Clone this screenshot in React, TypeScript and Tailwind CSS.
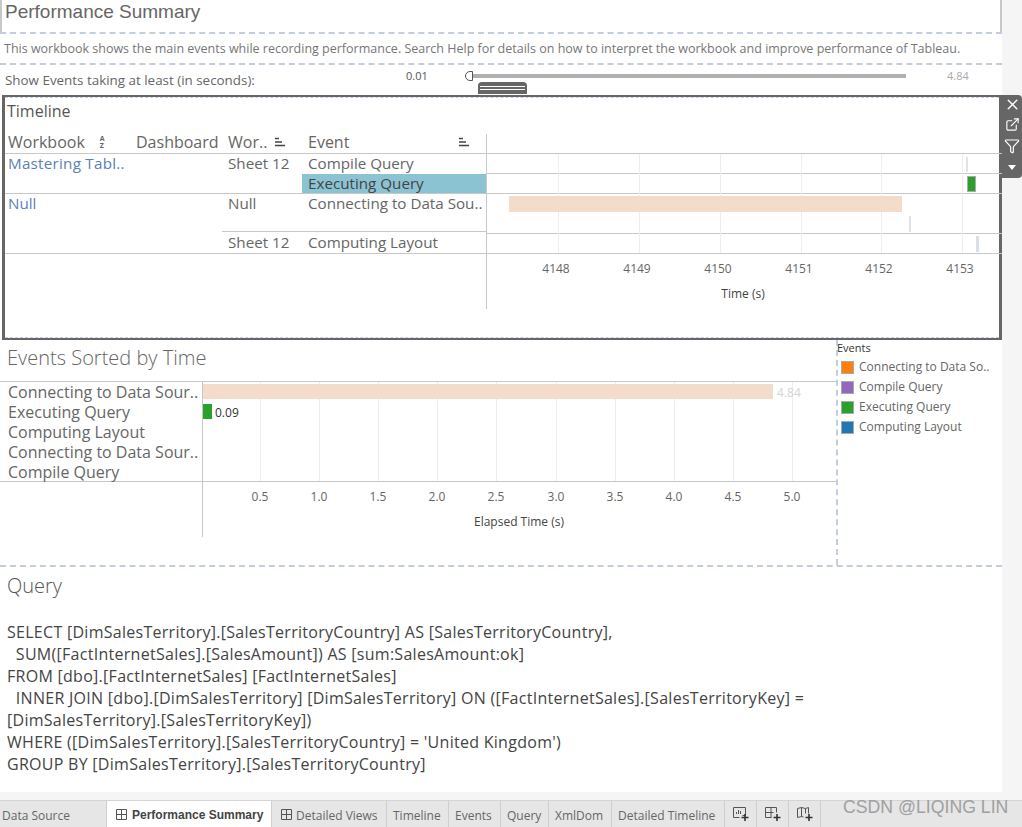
import { X, ExternalLink, Filter } from "lucide-react";

const font = "font-['Open_Sans',sans-serif]";

const timelineTicks = [
  { label: "4148", x: 71 },
  { label: "4149", x: 152 },
  { label: "4150", x: 233 },
  { label: "4151", x: 314 },
  { label: "4152", x: 394 },
  { label: "4153", x: 475 },
];

const elapsedTicks = [
  { label: "0.5", x: 57 },
  { label: "1.0", x: 116 },
  { label: "1.5", x: 175 },
  { label: "2.0", x: 234 },
  { label: "2.5", x: 293 },
  { label: "3.0", x: 353 },
  { label: "3.5", x: 412 },
  { label: "4.0", x: 471 },
  { label: "4.5", x: 530 },
  { label: "5.0", x: 589 },
];

const legend = [
  { label: "Connecting to Data So..", color: "bg-[#ff7f0e]" },
  { label: "Compile Query", color: "bg-[#9467bd]" },
  { label: "Executing Query", color: "bg-[#2ca02c]" },
  { label: "Computing Layout", color: "bg-[#1f77b4]" },
];

const queryLines = [
  "SELECT [DimSalesTerritory].[SalesTerritoryCountry] AS [SalesTerritoryCountry],",
  "  SUM([FactInternetSales].[SalesAmount]) AS [sum:SalesAmount:ok]",
  "FROM [dbo].[FactInternetSales] [FactInternetSales]",
  "  INNER JOIN [dbo].[DimSalesTerritory] [DimSalesTerritory] ON ([FactInternetSales].[SalesTerritoryKey] =",
  "[DimSalesTerritory].[SalesTerritoryKey])",
  "WHERE ([DimSalesTerritory].[SalesTerritoryCountry] = 'United Kingdom')",
  "GROUP BY [DimSalesTerritory].[SalesTerritoryCountry]",
];

function DashedLine() {
  return <div className="h-0.5 w-full shrink-0 border-t-2 border-dashed border-[#c4cde0]" />;
}

function SortIcon() {
  return (
    <svg width="12" height="10" viewBox="0 0 12 10" className="text-[#444]">
      <path d="M1 1.5h4M1 5h7M1 8.5h10" stroke="currentColor" strokeWidth="1.6" fill="none" />
    </svg>
  );
}

function SheetIcon() {
  return (
    <svg width="13" height="13" viewBox="0 0 13 13" className="shrink-0 text-[#555]">
      <path d="M1.5 1.5h10v10h-10zM6.5 1.5v10M1.5 6.5h10" stroke="currentColor" fill="none" />
    </svg>
  );
}

function NewSheetIcon({ kind }: { kind: "chart" | "grid" | "story" }) {
  return (
    <svg width="18" height="18" viewBox="0 0 18 18" className="text-[#555]">
      {kind === "chart" && (
        <path d="M1.5 2.5h12v8h-3M1.5 2.5v10h6M4.5 9V7M6.5 9V5M8.5 9V6" stroke="currentColor" fill="none" />
      )}
      {kind === "grid" && (
        <path d="M1.5 2.5h11v5M1.5 2.5v10h6M1.5 7.5h8M7 2.5v10" stroke="currentColor" fill="none" />
      )}
      {kind === "story" && (
        <path d="M1.5 3.5l4-1 4 1 3-1v6M1.5 3.5v9l4-1 2 .5M5.5 2.5v9M9.5 3.5v5" stroke="currentColor" fill="none" />
      )}
      <path d="M13 9v7M9.5 12.5h7" stroke="#333" strokeWidth="1.6" fill="none" />
    </svg>
  );
}

function Tab({ label, width, icon, active }: { label: string; width: string; icon?: boolean; active?: boolean }) {
  return (
    <div className={`flex h-full shrink-0 items-center border-r border-[#cfcfcf] text-xs ${width} ${active ? "bg-white text-[#444]" : "text-[#666]"}`}>
      {icon && <SheetIcon />}
      <span className={active ? "ml-1 pt-0.5 font-['Liberation_Sans',sans-serif] font-bold" : icon ? "ml-[3px] pt-1" : "pt-1"}>
        {label}
      </span>
    </div>
  );
}

function Timeline() {
  const line = "border-b border-[#c8c8c8]";
  const cell = "h-5 truncate leading-[18px]";
  return (
    <div className="relative h-[245px] w-[1000px] shrink-0 border-x-[3px] border-y-2 border-[#666] pl-[2px]">
      <div className="-ml-[2px] h-px border-t border-dashed border-[#c4cde0]" />
      <div className="pt-px text-base leading-6 font-medium text-[#555]">Timeline</div>
      <div className="-ml-[2px] mt-[11px] flex text-[#666]">
        <div className="w-[481px] shrink-0 text-[15.2px]">
          <div className={`flex h-5 items-center pb-[3px] text-[16px] ${line}`}>
            <div className="flex w-[131px] items-center pl-[3px]">
              Workbook
              <span className="ml-[15px] text-[7px] leading-[7px] font-bold">
                A
                <br />Z
              </span>
            </div>
            <div className="w-[92px]">Dashboard</div>
            <div className="flex w-[80px] items-center gap-[7px]">
              Wor..
              <SortIcon />
            </div>
            <div className="flex w-[178px] items-center justify-between pr-4">
              Event
              <SortIcon />
            </div>
          </div>
          <div className="flex h-10 border-b border-[#c8c8c8]">
            <div className={`w-[223px] pl-[3px] tracking-[0.25px] text-[#5b7fb5] ${cell}`}>Mastering Tabl..</div>
            <div className={`w-[74px] ${cell}`}>Sheet 12</div>
            <div className="flex w-[184px] flex-col">
              <div className={`pl-1.5 ${cell}`}>Compile Query</div>
              <div className={`bg-[#8cc3d3] pl-1.5 text-[#444] ${cell}`}>Executing Query</div>
            </div>
          </div>
          <div className="flex h-[60px] border-b border-[#c8c8c8]">
            <div className={`w-[217px] pl-[3px] text-[#5b7fb5] ${cell}`}>Null</div>
            <div className="flex flex-1 flex-col">
              <div className="flex h-10 border-b border-[#c8c8c8] pl-1.5">
                <div className={`w-[80px] ${cell}`}>Null</div>
                <div className={cell}>Connecting to Data Sou..</div>
              </div>
              <div className="flex pl-1.5 pt-px">
                <div className={`w-[80px] ${cell}`}>Sheet 12</div>
                <div className={cell}>Computing Layout</div>
              </div>
            </div>
          </div>
        </div>

        {/* timeline marks */}
        <div className="relative h-[175px] w-[516px] shrink-0 border-l border-[#c8c8c8]">
          <div className="h-5" />
          <div className="relative -mt-px h-[100px] border-t border-[#c8c8c8]">
            <div className="h-5 border-b border-[#c8c8c8]" />
            <div className="h-5 border-b border-[#c8c8c8]" />
            <div className="h-10 border-b border-[#c8c8c8]" />
            <div className="h-5 border-b border-[#c8c8c8]" />
            {timelineTicks.map((t) => (
              <div key={t.label} className="absolute top-0 h-full w-px bg-[#eeeeee]" style={{ left: t.x }} />
            ))}
            <div className="absolute left-[22px] top-[42px] h-4 w-[393px] bg-[#f4dccb]" />
            <div className="absolute left-[479px] top-[3px] h-[15px] w-0.5 bg-[#e3e3e3]" />
            <div className="absolute left-[480px] top-[22px] h-4 w-[9px] border border-[#aaa] bg-[#2ca02c]" />
            <div className="absolute left-[422px] top-[62px] h-4 w-0.5 bg-[#e3e3e3]" />
            <div className="absolute left-[489px] top-[82px] h-4 w-[3px] bg-[#d9e0e8]" />
          </div>
          <div className="relative">
            {timelineTicks.map((t) => (
              <div
                key={t.label}
                className="absolute top-[8px] w-10 -translate-x-1/2 text-center text-xs leading-4 text-[#666]"
                style={{ left: t.x - 2 }}
              >
                {t.label}
              </div>
            ))}
            <div className="absolute left-[256px] top-[33px] w-20 -translate-x-1/2 text-center text-xs leading-4 text-[#444]">
              Time (s)
            </div>
          </div>
        </div>
      </div>
      {/* dashed edge of the zone, inside the selection border */}
      <div className="absolute inset-x-0 bottom-0 h-px border-t border-dashed border-[#c4cde0]" />
    </div>
  );
}

function EventsChart() {
  const rows = ["Connecting to Data Sour..", "Executing Query", "Computing Layout", "Connecting to Data Sour..", "Compile Query"];
  return (
    <div className="h-[225px] w-[836px] shrink-0 text-[#666]">
      <div className="pl-[7px] pt-1 text-xl leading-7 font-light text-[#666]">Events Sorted by Time</div>
      <div className="mt-[9px] flex h-[156px]">
        <div className="w-[203px] shrink-0 border-r border-[#c8c8c8]">
          <div className="h-[101px] border-y border-[#c8c8c8] text-[16px] leading-5">
            {rows.map((r, i) => (
              <div key={i} className="truncate pl-2">
                {r}
              </div>
            ))}
          </div>
        </div>
        <div className="relative flex-1">
          <div className="relative h-[101px] border-y border-[#c8c8c8]">
            {elapsedTicks.map((t) => (
              <div key={t.label} className="absolute top-0 h-full w-px bg-[#eeeeee]" style={{ left: t.x }} />
            ))}
            <div className="absolute left-0 top-[2px] h-[15px] w-[570px] bg-[#f4dccb]" />
            <div className="absolute left-[574px] top-[1px] text-xs leading-5 text-[#d4d4d4]">4.84</div>
            <div className="absolute left-0 top-[22px] h-[15px] w-[9px] bg-[#2ca02c]" />
            <div className="absolute left-[12px] top-[21px] text-xs leading-5 text-[#333]">0.09</div>
          </div>
          {elapsedTicks.map((t) => (
            <div
              key={t.label}
              className="absolute top-[108px] w-8 -translate-x-1/2 text-center text-xs leading-4 text-[#666]"
              style={{ left: t.x }}
            >
              {t.label}
            </div>
          ))}
          <div className="absolute left-[316px] top-[133px] w-32 -translate-x-1/2 text-center text-xs leading-4 text-[#444]">
            Elapsed Time (s)
          </div>
        </div>
      </div>
    </div>
  );
}

export default function App() {
  return (
    <div className={`relative flex h-[827px] w-[1022px] flex-col overflow-hidden bg-[#f5f5f5] ${font}`}>
      <div className="flex h-[792px] w-[1002px] shrink-0 flex-col bg-white">
        {/* page title */}
        <div className="h-[32px] shrink-0 border-x-2 border-[#c8c8c8] pl-[3px] font-['Liberation_Sans',sans-serif] text-[19px] leading-[23px] text-[#666]">
          Performance Summary
        </div>
        <DashedLine />
        <div className="h-[29px] shrink-0 pl-1 pt-px text-[12.5px] leading-7 text-[#777]">
          This workbook shows the main events while recording performance. Search Help for details on how to interpret the workbook and improve performance of Tableau.
        </div>
        <DashedLine />

        {/* filter row */}
        <div className="relative flex h-[30px] shrink-0 items-center pb-2 pl-[5px] text-[13.4px] font-medium text-[#666]">
          <span className="w-[401px] pt-2">Show Events taking at least (in seconds):</span>
          <span className="w-[64px] text-[11px] font-normal text-[#555]">0.01</span>
          <div className="relative h-1 w-[436px] bg-[#b0b0b0]">
            <div className="absolute -left-[5px] -top-[3px] h-2.5 w-2 rounded-l-full border border-[#555] bg-white" />
          </div>
          <span className="ml-[41px] text-[11px] font-normal text-[#aaa]">4.84</span>
          <div className="absolute left-[478px] top-[17px] flex h-3 w-[49px] flex-col justify-center gap-0.5 rounded-t-sm bg-[#666] px-0.5">
            <div className="h-px bg-white" />
            <div className="h-px bg-white" />
          </div>
        </div>

        <div className="relative ml-0.5">
          <Timeline />
          {/* selected zone toolbar */}
          <div className="absolute left-[1000px] top-0 flex h-[83px] w-[20px] flex-col items-center rounded-r-sm bg-[#666] pt-px text-white">
            <X size={17} strokeWidth={2} />
            <ExternalLink size={15} strokeWidth={1.8} className="mt-[4px]" />
            <Filter size={16} strokeWidth={1.8} className="mt-1.5" />
            <div className="mt-[11px] h-0 w-0 border-x-4 border-t-[5px] border-x-transparent border-t-white" />
          </div>
        </div>

        {/* events + legend */}
        <div className="flex h-[225px] shrink-0">
          <EventsChart />
          <div className="flex-1 border-l-2 border-dashed border-[#c4cde0] pt-px">
            <div className="-ml-px text-[11px] leading-[13px] text-[#333]">Events</div>
            <div className="mt-[3px] pl-[3px]">
              {legend.map((l) => (
                <div key={l.label} className="flex h-5 items-center gap-[5px] text-xs text-[#666]">
                  <div className={`size-[13px] shrink-0 border border-[#aaa] ${l.color}`} />
                  {l.label}
                </div>
              ))}
            </div>
          </div>
        </div>
        <DashedLine />

        {/* query */}
        <div className="flex-1 pl-[7px] text-[#555]">
          <div className="pt-[5px] text-xl leading-7 font-light">Query</div>
          <div className="mt-[21px] text-base leading-[22px] tracking-[0.28px] whitespace-pre text-[#444]">
            {queryLines.map((q) => (
              <div key={q}>{q}</div>
            ))}
          </div>
        </div>
      </div>

      <div className="h-[9px] shrink-0 border-b border-[#d4d4d4]" />

      {/* sheet tabs */}
      <div className="flex h-[26px] shrink-0 items-center bg-[#e6e6e6]">
        <Tab label="Data Source" width="w-[107px] pl-0.5" />
        <Tab label="Performance Summary" width="w-[165px] pl-2" icon active />
        <Tab label="Detailed Views" width="w-[115px] pl-2" icon />
        <Tab label="Timeline" width="w-[62px] pl-1.5" />
        <Tab label="Events" width="w-[52px] pl-1.5" />
        <Tab label="Query" width="w-[48px] pl-1.5" />
        <Tab label="XmlDom" width="w-[63px] pl-1.5" />
        <Tab label="Detailed Timeline" width="w-[113px] pl-1.5" />
        {(["chart", "grid", "story"] as const).map((k) => (
          <div key={k} className="flex h-full w-8 items-center justify-center border-r border-[#cfcfcf]">
            <NewSheetIcon kind={k} />
          </div>
        ))}
      </div>
      <div className="absolute left-[843px] top-[795px] font-['Liberation_Sans',sans-serif] text-[17.7px] leading-[24px] text-[#a0a0a0]">
        CSDN @LIQING LIN
      </div>
    </div>
  );
}
